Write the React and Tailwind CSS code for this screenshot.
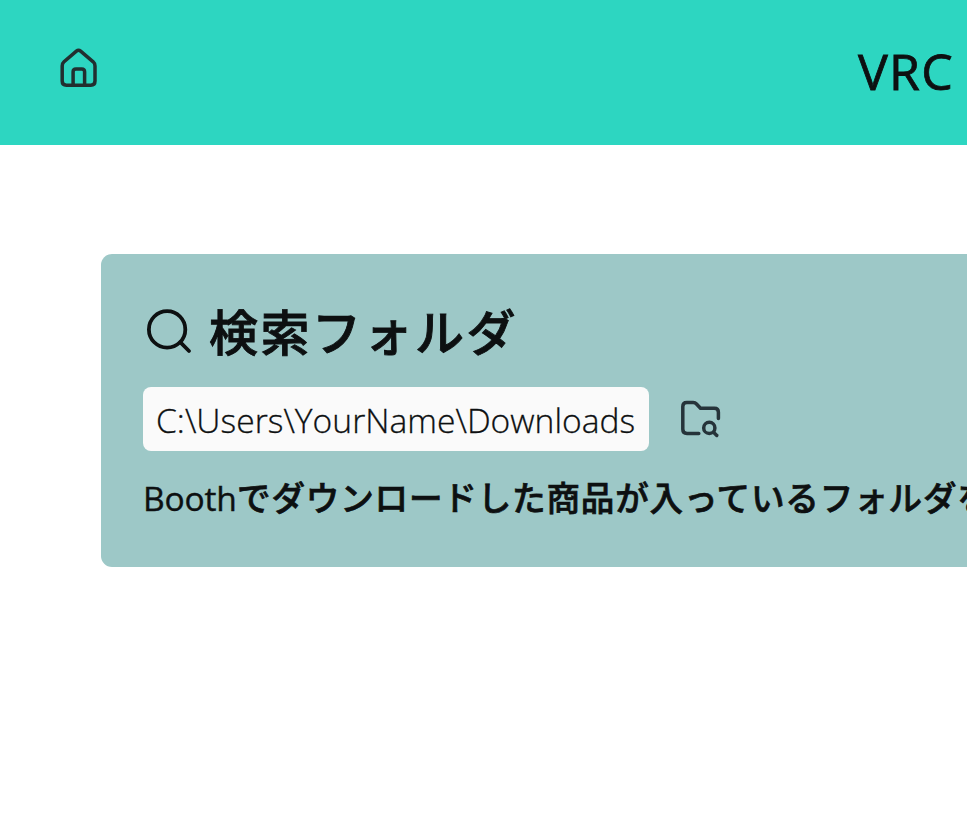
function HomeIcon() {
  return (
    <svg className="h-[44px] w-[44px] shrink-0" viewBox="0 0 44 44" fill="none" stroke="#222f30" strokeWidth="3.5" strokeLinecap="round" strokeLinejoin="round">
      <path d="M19.400 4.200 Q21.500 2.400 23.600 4.200 L36.200 14.800 Q38 16.400 38 18.900 V34 Q38 38.200 33.800 38.200 H9.400 Q5.200 38.200 5.200 34 V18.900 Q5.200 16.400 7 14.800 Z" />
      <path d="M16.100 38.200 V24.800 Q16.100 21.900 19 21.900 H24.700 Q27.600 21.900 27.600 24.800 V38.200" />
    </svg>
  );
}

function SearchIcon() {
  return (
    <svg className="h-[52px] w-[52px] shrink-0" viewBox="0 0 52 52" fill="none" stroke="#0d1011" strokeWidth="3.8" strokeLinecap="round">
      <circle cx="24.100" cy="24.400" r="18.200" />
      <path d="M37.200 37.200 L46 46" />
    </svg>
  );
}

function FolderSearchIcon() {
  return (
    <svg className="h-[52px] w-[52px] shrink-0" viewBox="0 0 52 52" fill="none" stroke="#26343a" strokeWidth="3.5" strokeLinecap="round" strokeLinejoin="round">
      <path d="M24.800 40.500 H13 Q8.800 40.500 8.800 36.300 V13.600 Q8.800 9.600 12.800 9.600 H19.200 Q21.200 9.600 22.500 11 L26.500 15.300 H40.400 Q44.400 15.300 44.400 19.300 V25.500" />
      <circle cx="35.300" cy="34.900" r="5.600" />
      <path d="M39.500 39.200 L42.800 42.500" />
    </svg>
  );
}

export default function App() {
  return (
    <div className="h-[819px] w-[967px] overflow-hidden bg-white font-['Open_Sans','Noto_Sans_CJK_JP',sans-serif] text-[#0d1011]">
      <header className="flex h-[145px] justify-between bg-[#2dd6c1] pl-[57px]">
        <div className="pt-[47px]"><HomeIcon /></div>
        <h1 className="w-[109px] pt-[37px] text-[50px] leading-[68px] tracking-[1.300px] font-medium whitespace-nowrap [-webkit-text-stroke:0.800px_#0d1011]">VRC</h1>
      </header>
      <main className="pt-[109px] pl-[101px]">
        <section className="h-[313px] w-[866px] overflow-hidden rounded-l-[11px] bg-[#9dc8c7] pt-[51px] pl-[42px]">
          <div className="flex h-[54px] items-start">
            <SearchIcon />
            <h2 className="-mt-[2px] ml-[14px] font-['Noto_Sans_CJK_JP',sans-serif] text-[49px] leading-[54px] tracking-[2.500px] font-medium whitespace-nowrap [-webkit-text-stroke:0.9px_#0d1011]">検索フォルダ</h2>
          </div>
          <div className="mt-[28px] flex h-[64px] items-center">
            <div className="h-[64px] w-[506px] shrink-0 rounded-[8px] bg-[#fafafa] pl-[13px] text-[33.6px] leading-[66px] font-light tracking-[0.020px] whitespace-nowrap [-webkit-text-stroke:0.300px_#0d1011]">C:\Users\YourName\Downloads</div>
            <div className="ml-[25px]"><FolderSearchIcon /></div>
          </div>
          <p className="mt-[22px] flex h-[48px] text-[33.6px] leading-[48px] whitespace-nowrap">
            <span className="w-[94px] shrink-0 pt-[1px] font-medium tracking-[-0.200px] [-webkit-text-stroke:0.400px_#0d1011]">Booth</span>
            <span className="font-['Noto_Sans_CJK_JP',sans-serif] text-[33.6px] tracking-[0.800px] font-medium [-webkit-text-stroke:0.700px_#0d1011]">でダウンロードした商品が入っているフォルダを</span>
          </p>
        </section>
      </main>
    </div>
  );
}
